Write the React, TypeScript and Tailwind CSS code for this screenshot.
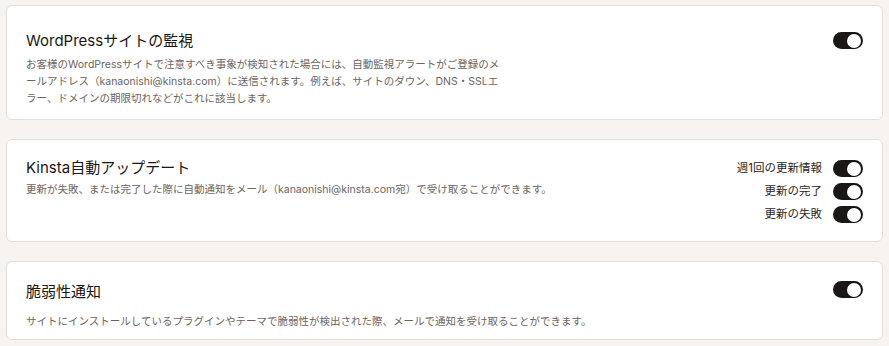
import React from "react";

const font = { fontFamily: 'Inter, "Noto Sans CJK JP", sans-serif' };

function Toggle() {
  return (
    <div className="relative h-[17px] w-[30px] shrink-0 rounded-full bg-[#1b1717]">
      <div className="absolute right-[2px] top-[1.5px] h-[14px] w-[14px] rounded-full bg-white shadow-[0_0_1px_1px_rgba(0,0,0,0.35)]" />
    </div>
  );
}

export default function App() {
  return (
    <div className="min-h-[346px] bg-[#f7f3f0] px-[6px] pt-[5px] pb-[6px]" style={font}>
      <div className="flex flex-col gap-[19px]">
        {/* Card 1 */}
        <div className="flex h-[115px] items-start justify-between rounded-[6px] border border-[#e8ddd5] bg-white pl-[19px] pr-[19px] pt-[23px]">
          <div className="flex flex-col">
            <div className="text-[15px] leading-[24px] text-[#1a1614]">WordPressサイトの監視</div>
            <div className="mt-[3px] text-[10.5px] leading-[17px] text-[#6d6460]">
              <div className="whitespace-nowrap">お客様のWordPressサイトで注意すべき事象が検知された場合には、自動監視アラートがご登録のメ</div>
              <div className="whitespace-nowrap">ールアドレス（kanaonishi@kinsta.com）に送信されます。例えば、サイトのダウン、DNS・SSLエ</div>
              <div className="whitespace-nowrap">ラー、ドメインの期限切れなどがこれに該当します。</div>
            </div>
          </div>
          <div className="mt-[3px]">
            <Toggle />
          </div>
        </div>

        {/* Card 2 */}
        <div className="flex h-[103px] items-start justify-between rounded-[6px] border border-[#e8ddd5] bg-white pl-[19px] pr-[19px] pt-[16px]">
          <div className="flex flex-col">
            <div className="text-[15px] leading-[24px] text-[#1a1614]">Kinsta自動アップデート</div>
            <div className="mt-[1px] whitespace-nowrap text-[10.5px] leading-[17px] text-[#6d6460]">
              更新が失敗、または完了した際に自動通知をメール（kanaonishi@kinsta.com宛）で受け取ることができます。
            </div>
          </div>
          <div className="mt-[4px] flex flex-col items-end gap-[6px]">
            {["週1回の更新情報", "更新の完了", "更新の失敗"].map((l) => (
              <div key={l} className="flex items-center gap-[11px]">
                <span className="text-[11.5px] leading-[17px] text-[#2b2624]">{l}</span>
                <Toggle />
              </div>
            ))}
          </div>
        </div>

        {/* Card 3 */}
        <div className="flex h-[79px] items-start justify-between rounded-[6px] border border-[#e8ddd5] bg-white pl-[19px] pr-[19px] pt-[18px]">
          <div className="flex flex-col">
            <div className="text-[15px] leading-[24px] text-[#1a1614]">脆弱性通知</div>
            <div className="mt-[9px] whitespace-nowrap text-[10.5px] leading-[17px] text-[#6d6460]">
              サイトにインストールしているプラグインやテーマで脆弱性が検出された際、メールで通知を受け取ることができます。
            </div>
          </div>
          <div className="mt-[1px]">
            <Toggle />
          </div>
        </div>
      </div>
    </div>
  );
}
